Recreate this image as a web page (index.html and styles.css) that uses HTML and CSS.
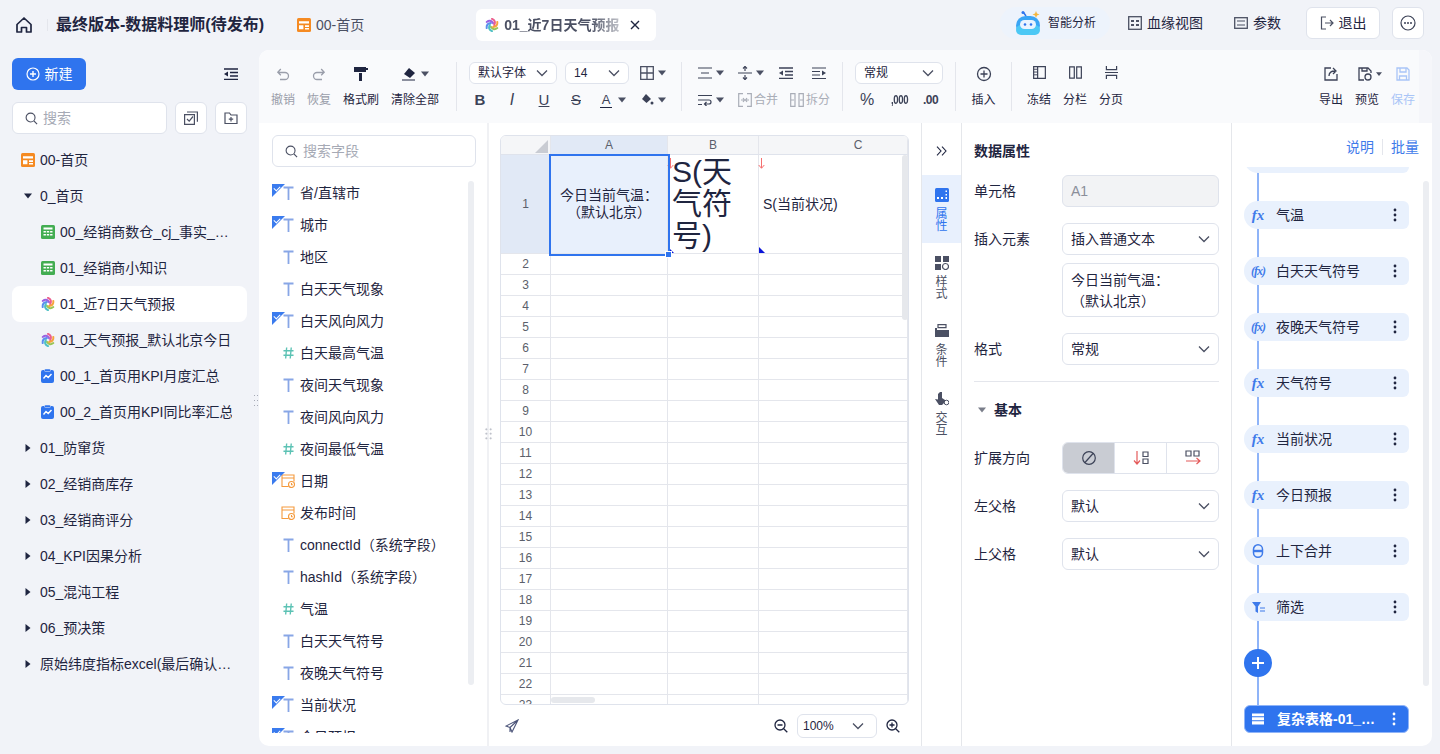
FILE: index.html
```html
<!DOCTYPE html>
<html lang="zh-CN">
<head>
<meta charset="utf-8">
<title>最终版本-数据料理师(待发布)</title>
<link rel="stylesheet" href="styles.css">
</head>
<body>
<svg class="sprite" aria-hidden="true">
  <symbol id="i-dash" viewBox="0 0 14 14"><rect width="14" height="14" rx="1.5" fill="#f58a22"/><path d="M2 3.2h10v2.3H2zM2 7.3h4.4v4H2zM8 7.300h4v1.600H8zM8 10h4v1.400H8z" fill="#fff"/></symbol>
  <symbol id="i-sheet" viewBox="0 0 14 14"><rect width="14" height="14" rx="1.5" fill="#43ad52"/><path d="M2.5 2.5h9v2h-9zM2.5 6h2.400v1.600H2.500zM5.800 6h2.400v1.600H5.800zM9.100 6h2.400v1.600H9.100zM2.500 8.900h2.400v1.600H2.500zM5.800 8.900h2.400v1.600H5.800zM9.100 8.900h2.400v1.600H9.100z" fill="#fff"/></symbol>
  <symbol id="i-kpi" viewBox="0 0 14 14"><rect y="1" width="13" height="13" rx="2" fill="#2f74ee"/><rect x="3.500" width="6" height="2.500" rx="1" fill="#2f74ee" stroke="#f1f3f8" stroke-width=".5"/><path d="M2.500 9.500 5 6.500l2.200 2L10.500 5" fill="none" stroke="#fff" stroke-width="1.400"/></symbol>
  <symbol id="i-wheel" viewBox="0 0 16 16" fill="none" stroke-width="2.300" stroke-linecap="round"><path d="M14.060 11.500Q9.810 14.760 6.750 10.170" stroke="#9ac556"/><path d="M8 15Q3.050 12.950 5.500 8" stroke="#4fc0c4"/><path d="M1.940 11.500Q1.240 6.190 6.750 5.830" stroke="#5a8fee"/><path d="M1.940 4.500Q6.190 1.240 9.250 5.830" stroke="#9a62e0"/><path d="M8 1Q12.950 3.050 10.500 8" stroke="#ec5f8d"/><path d="M14.060 4.500Q14.760 9.810 9.250 10.170" stroke="#f5a43c"/></symbol>
  <symbol id="i-caret" viewBox="0 0 8 8"><path d="M0 1.500h8L4 6.500z" fill="currentColor"/></symbol>
  <symbol id="i-chev" viewBox="0 0 12 8"><path d="M1 1.500 6 6.500l5-5" fill="none" stroke="currentColor" stroke-width="1.300"/></symbol>
  <symbol id="i-search" viewBox="0 0 14 14"><circle cx="6" cy="6" r="4.800" fill="none" stroke="currentColor" stroke-width="1.200"/><path d="m9.600 9.600 3.400 3.400" stroke="currentColor" stroke-width="1.300"/></symbol>
  <symbol id="i-t" viewBox="0 0 11 14"><path d="M.5 1.500h10M5.500 1.500V14" fill="none" stroke="#88a6e6" stroke-width="1.800"/></symbol>
  <symbol id="i-num" viewBox="0 0 12 14"><path d="M4 1 2.900 13M9 1 7.900 13M.5 4.500h11M.5 9.500h11" fill="none" stroke="#5cc2b4" stroke-width="1.500"/></symbol>
  <symbol id="i-date" viewBox="0 0 14 14" fill="none" stroke="#f59a3c" stroke-width="1.100"><path d="M7.500 12.500H1V1h12v6.500M1 4h12"/><circle cx="10.500" cy="10.500" r="3"/><path d="M10.500 9v1.700h1.300"/></symbol>
  <symbol id="i-dots" viewBox="0 0 4 14"><circle cx="2" cy="2" r="1.400" fill="currentColor"/><circle cx="2" cy="7" r="1.400" fill="currentColor"/><circle cx="2" cy="12" r="1.400" fill="currentColor"/></symbol>
  <symbol id="i-align" viewBox="0 0 14 12"><path d="M0 1h14M3 6h8M0 11h14" stroke="currentColor" stroke-width="1.200"/></symbol>
  <symbol id="i-indent" viewBox="0 0 14 12"><path d="M0 1h14M6 4.500h8M6 8h8M0 11.500h14" stroke="currentColor" stroke-width="1.300"/><path d="M4 3.500v5L0 6z" fill="currentColor"/></symbol>
  <symbol id="i-outdent" viewBox="0 0 14 12"><path d="M0 1h14M0 4.500h8M0 8h8M0 11.500h14" stroke="currentColor" stroke-width="1.200"/><path d="M10 3.500v5L14 6z" fill="currentColor"/></symbol>
  <symbol id="i-flag" viewBox="0 0 7 11"><path d="M3.500 0v10M.7 7l2.800 3.300L6.300 7" fill="none" stroke="#f57070"/></symbol>
</svg>
<div class="app">
  <header class="top">
    <div class="top-left">
      <svg class="home" viewBox="0 0 18 18" width="18" height="18"><path d="M2 8.500 9 2l7 6.500V16h-4.500v-4.500h-5V16H2z" fill="none" stroke="#1f2540" stroke-width="1.700" stroke-linejoin="round"/></svg>
      <span class="vline"></span>
      <h1 class="title">最终版本-数据料理师(待发布)</h1>
      <a class="tab"><svg class="ic14"><use href="#i-dash"/></svg>00-首页</a>
      <a class="tab tab-on"><svg class="ic14"><use href="#i-wheel"/></svg><span class="tab-text">01_近7日天气预报</span><svg class="tab-x" viewBox="0 0 10 10" width="10" height="10"><path d="m1 1 8 8M9 1 1 9" stroke="#1f2540" stroke-width="1.400"/></svg></a>
    </div>
    <div class="top-right">
      <a class="ai">
        <svg viewBox="0 0 28 26" width="28" height="26"><path d="M11 6 8.500 2.500" stroke="#2f74ee" stroke-width="1.500"/><circle cx="8" cy="2.500" r="1.500" fill="#2f74ee"/><path d="m21 1 1 2.500 2.500 1-2.500 1-1 2.500-1-2.500-2.500-1 2.500-1z" fill="#f5b63c"/><rect x="1" y="6" width="24" height="19" rx="9.500" fill="#3aa5f5"/><rect x="1" y="15" width="24" height="10" rx="5" fill="#4cc8f5"/><rect x="5" y="10" width="16" height="9" rx="4.500" fill="#eaf4ff"/><circle cx="10" cy="14.500" r="1.300" fill="#2f74ee"/><circle cx="16" cy="14.500" r="1.300" fill="#2f74ee"/></svg>
        智能分析
      </a>
      <a class="link link-a"><svg viewBox="0 0 14 14" width="14" height="14"><rect x=".7" y=".7" width="12.600" height="12.600" fill="none" stroke="#4b5063" stroke-width="1.300"/><path d="M3 4h3v2H3zM3 8h3v2H3zM8 4h3v2H8zM8 8h3v2H8z" fill="#4b5063"/></svg>血缘视图</a>
      <a class="link link-b"><svg viewBox="0 0 14 14" width="14" height="14"><rect x=".7" y="1.700" width="12.600" height="10.600" fill="none" stroke="#4b5063" stroke-width="1.300"/><path d="M3 5h8M3 9h8" stroke="#4b5063" stroke-width="1.200"/></svg>参数</a>
      <a class="btn-out"><svg viewBox="0 0 14 14" width="14" height="14" fill="none" stroke="#4b5063" stroke-width="1.200"><path d="M6 1H1.500v12H6M5 7h8M10 4l3 3-3 3"/></svg>退出</a>
      <a class="btn-more"><svg viewBox="0 0 16 16" width="16" height="16"><circle cx="8" cy="8" r="7" fill="none" stroke="#3c4257" stroke-width="1.200"/><circle cx="5" cy="8" r="1" fill="#3c4257"/><circle cx="8" cy="8" r="1" fill="#3c4257"/><circle cx="11" cy="8" r="1" fill="#3c4257"/></svg></a>
    </div>
  </header>

  <main class="main">
    <aside class="side">
      <div class="side-head">
        <a class="btn-new"><svg viewBox="0 0 14 14" width="14" height="14"><circle cx="7" cy="7" r="6" fill="none" stroke="#fff" stroke-width="1.200"/><path d="M7 4v6M4 7h6" stroke="#fff" stroke-width="1.400"/></svg>新建</a>
        <svg class="collapse" viewBox="0 0 14 12" width="14" height="12"><use href="#i-indent"/></svg>
      </div>
      <div class="side-tools">
        <label class="search search-side"><svg class="ic-s"><use href="#i-search"/></svg>搜索</label>
        <a class="sq"><svg viewBox="0 0 14 14" width="14" height="14" fill="none" stroke="#4b5063" stroke-width="1.200"><path d="M.6 3.600h9.800v9.800H.6zM3 1h10.400v9.800"/><path d="m3 8 2.200 2.200L9 5.500"/></svg></a>
        <a class="sq"><svg viewBox="0 0 14 14" width="14" height="14" fill="none" stroke="#4b5063" stroke-width="1.200"><path d="M1 2h4.500L7 4h6v8.500H1zM7 6v4.500M4.800 8.200h4.400"/></svg></a>
      </div>
      <nav class="tree">
        <a class="node"><svg class="ic14"><use href="#i-dash"/></svg><span>00-首页</span></a>
        <a class="node"><svg class="arrow"><use href="#i-caret"/></svg><span>0_首页</span></a>
        <a class="node sub"><svg class="ic14"><use href="#i-sheet"/></svg><span>00_经销商数仓_cj_事实_…</span></a>
        <a class="node sub"><svg class="ic14"><use href="#i-sheet"/></svg><span>01_经销商小知识</span></a>
        <a class="node sub node-on"><svg class="ic14"><use href="#i-wheel"/></svg><span>01_近7日天气预报</span></a>
        <a class="node sub"><svg class="ic14"><use href="#i-wheel"/></svg><span>01_天气预报_默认北京今日</span></a>
        <a class="node sub"><svg class="ic14"><use href="#i-kpi"/></svg><span>00_1_首页用KPI月度汇总</span></a>
        <a class="node sub"><svg class="ic14"><use href="#i-kpi"/></svg><span>00_2_首页用KPI同比率汇总</span></a>
        <a class="node"><svg class="arrow closed"><use href="#i-caret"/></svg><span>01_防窜货</span></a>
        <a class="node"><svg class="arrow closed"><use href="#i-caret"/></svg><span>02_经销商库存</span></a>
        <a class="node"><svg class="arrow closed"><use href="#i-caret"/></svg><span>03_经销商评分</span></a>
        <a class="node"><svg class="arrow closed"><use href="#i-caret"/></svg><span>04_KPI因果分析</span></a>
        <a class="node"><svg class="arrow closed"><use href="#i-caret"/></svg><span>05_混沌工程</span></a>
        <a class="node"><svg class="arrow closed"><use href="#i-caret"/></svg><span>06_预决策</span></a>
        <a class="node"><svg class="arrow closed"><use href="#i-caret"/></svg><span>原始纬度指标excel(最后确认…</span></a>
      </nav>
      <span class="grip grip-side"></span>
    </aside>

    <section class="work">
      <div class="toolbar">
        <div class="tg tg-file">
          <a class="tool off w36"><svg viewBox="0 0 16 16" width="16" height="16" fill="none" stroke="#9a9eaa" stroke-width="1.300"><path d="M3 6.500h7a3.500 3.500 0 0 1 0 7H5M5.800 3 2.800 6.300l3 3"/></svg>撤销</a>
          <a class="tool off w36"><svg viewBox="0 0 16 16" width="16" height="16" fill="none" stroke="#9a9eaa" stroke-width="1.300"><path d="M13 6.500H6a3.500 3.500 0 0 0 0 7h5M10.200 3l3 3.300-3 3"/></svg>恢复</a>
          <a class="tool w48"><svg viewBox="0 0 16 16" width="16" height="16"><path d="M1 1h12v5H1z" fill="#1f2540"/><path d="M13 2h2v2h-2z" fill="#1f2540"/><path d="M6 7h3v8H6z" fill="#1f2540"/></svg>格式刷</a>
          <a class="tool w60"><span class="tool-ic"><svg viewBox="0 0 16 14" width="16" height="14"><path d="m8 1 6 5-5 5-6-4z" fill="#1f2540"/><path d="M1 13h13" stroke="#1f2540"/></svg><svg class="caret8"><use href="#i-caret"/></svg></span>清除全部</a>
        </div>
        <i class="sep"></i>
        <div class="tg tg-font">
          <div class="tr">
            <div class="sel sel-font">默认字体<svg class="chev"><use href="#i-chev"/></svg></div>
            <div class="sel sel-size">14<svg class="chev"><use href="#i-chev"/></svg></div>
            <span class="ti ti-border"><svg viewBox="0 0 14 14" width="14" height="14" fill="none" stroke="#4b5063" stroke-width="1.300"><path d="M.7.700h12.600v12.600H.7zM7 .7v12.600M.7 7h12.600"/></svg><svg class="caret8"><use href="#i-caret"/></svg></span>
          </div>
          <div class="tr tr-fmt">
            <span class="ti fmt-b">B</span>
            <span class="ti fmt-i">I</span>
            <span class="ti fmt-u">U</span>
            <span class="ti fmt-s">S</span>
            <span class="ti fmt-a"><span class="fmt-a-l">A</span><svg class="caret8"><use href="#i-caret"/></svg></span>
            <span class="ti fmt-f"><svg viewBox="0 0 14 14" width="14" height="14"><path d="m6 1 5 5-4.500 4L2 6z" fill="#3c4257"/><circle cx="12" cy="10" r="1.500" fill="#3c4257"/></svg><svg class="caret8"><use href="#i-caret"/></svg></span>
          </div>
        </div>
        <i class="sep"></i>
        <div class="tg tg-align">
          <div class="tr">
            <span class="ti al1"><svg viewBox="0 0 14 12" width="14" height="12"><use href="#i-align"/></svg><svg class="caret8"><use href="#i-caret"/></svg></span>
            <span class="ti al2"><svg viewBox="0 0 14 14" width="14" height="14" fill="none" stroke="#3c4257" stroke-width="1.200"><path d="M0 7h14M7 .5V5M7 9v4.500"/><path d="M5 2.500 7 .5l2 2M5 11.500l2 2 2-2" /></svg><svg class="caret8"><use href="#i-caret"/></svg></span>
            <span class="ti al3"><svg viewBox="0 0 14 12" width="14" height="12"><use href="#i-indent"/></svg></span>
            <span class="ti al4"><svg viewBox="0 0 14 12" width="14" height="12"><use href="#i-outdent"/></svg></span>
          </div>
          <div class="tr">
            <span class="ti al1"><svg viewBox="0 0 14 12" width="14" height="12" fill="none" stroke="#3c4257" stroke-width="1.200"><path d="M0 1.500h14M0 6h11a2 2 0 0 1 0 4H7M0 10.500h4M8.500 8l-2 2 2 2"/></svg><svg class="caret8"><use href="#i-caret"/></svg></span>
            <span class="ti dim merge"><svg viewBox="0 0 14 14" width="14" height="14" fill="none" stroke="#a9adb7" stroke-width="1.200"><path d="M5 .7H.7v12.600H5M9 .7h4.300v12.600H9M3 7h3M11 7H8M5 5l1.500 2L5 9M9 5 7.500 7 9 9"/></svg>合并</span>
            <span class="ti dim split"><svg viewBox="0 0 14 14" width="14" height="14" fill="none" stroke="#a9adb7" stroke-width="1.200"><path d="M5 .7H.7v12.600H5V.7zM9 .7h4.300v12.600H9zM1 7h3M10 7h3"/></svg>拆分</span>
          </div>
        </div>
        <i class="sep"></i>
        <div class="tg tg-num">
          <div class="tr"><div class="sel sel-fmt">常规<svg class="chev"><use href="#i-chev"/></svg></div></div>
          <div class="tr tr-num"><span class="n n1">%</span><span class="n n2">,000</span><span class="n n3">.00</span></div>
        </div>
        <i class="sep"></i>
        <a class="tool w57"><svg viewBox="0 0 16 16" width="16" height="16"><circle cx="8" cy="8" r="6.500" fill="none" stroke="#3c4257" stroke-width="1.300"/><path d="M8 4.500v7M4.500 8h7" stroke="#3c4257" stroke-width="1.300"/></svg>插入</a>
        <i class="sep"></i>
        <div class="tg tg-view">
          <a class="tool w36"><svg viewBox="0 0 14 14" width="14" height="14" fill="none" stroke="#3c4257" stroke-width="1.300"><path d="M.7.700h12.600v12.600H.7zM5 .7v12.600"/><path d="M1 3.500h4M1 6.500h4M1 9.500h4" stroke-width="1"/></svg>冻结</a>
          <a class="tool w36"><svg viewBox="0 0 14 14" width="14" height="14" fill="none" stroke="#3c4257" stroke-width="1.300"><path d="M.7 1h5v12h-5zM8.300 1h5v12h-5z"/></svg>分栏</a>
          <a class="tool w36"><svg viewBox="0 0 14 14" width="14" height="14" fill="none" stroke="#3c4257" stroke-width="1.300"><path d="M1.500 0v4h11V0M1.500 14v-4h11v4M0 7h14"/></svg>分页</a>
        </div>
        <div class="tg tg-save">
          <a class="tool w36"><svg viewBox="0 0 14 14" width="14" height="14" fill="none" stroke="#3c4257" stroke-width="1.300"><path d="M7 1H1v12h12V7M5 9c0-3 2-5 6-5M9 1l3 3-3 3"/></svg>导出</a>
          <a class="tool w36 tool-pre"><span class="tool-ic"><svg viewBox="0 0 14 14" width="14" height="14" fill="none" stroke="#3c4257" stroke-width="1.300"><path d="M6 13H1V1h9l3 3v2"/><path d="M4 1v3h5V1"/><circle cx="10" cy="10" r="3"/></svg><svg class="caret6"><use href="#i-caret"/></svg></span>预览</a>
          <a class="tool w36 tool-save"><svg viewBox="0 0 14 14" width="14" height="14" fill="none" stroke="#a9c5f7" stroke-width="1.300"><path d="M1 1h10l2 2v10H1zM4 1v4h6V1M3.500 13V9h7v4"/></svg>保存</a>
        </div>
      </div>

      <div class="body">
        <div class="fields">
          <label class="search search-field"><svg class="ic-s"><use href="#i-search"/></svg>搜索字段</label>
          <ul class="field-list">
            <li class="field used"><svg class="fi"><use href="#i-t"/></svg>省/直辖市</li>
            <li class="field used"><svg class="fi"><use href="#i-t"/></svg>城市</li>
            <li class="field"><svg class="fi"><use href="#i-t"/></svg>地区</li>
            <li class="field"><svg class="fi"><use href="#i-t"/></svg>白天天气现象</li>
            <li class="field used"><svg class="fi"><use href="#i-t"/></svg>白天风向风力</li>
            <li class="field"><svg class="fi"><use href="#i-num"/></svg>白天最高气温</li>
            <li class="field"><svg class="fi"><use href="#i-t"/></svg>夜间天气现象</li>
            <li class="field"><svg class="fi"><use href="#i-t"/></svg>夜间风向风力</li>
            <li class="field"><svg class="fi"><use href="#i-num"/></svg>夜间最低气温</li>
            <li class="field used"><svg class="fi fi-d"><use href="#i-date"/></svg>日期</li>
            <li class="field"><svg class="fi fi-d"><use href="#i-date"/></svg>发布时间</li>
            <li class="field"><svg class="fi"><use href="#i-t"/></svg>connectId（系统字段）</li>
            <li class="field"><svg class="fi"><use href="#i-t"/></svg>hashId（系统字段）</li>
            <li class="field"><svg class="fi"><use href="#i-num"/></svg>气温</li>
            <li class="field"><svg class="fi"><use href="#i-t"/></svg>白天天气符号</li>
            <li class="field"><svg class="fi"><use href="#i-t"/></svg>夜晚天气符号</li>
            <li class="field used"><svg class="fi"><use href="#i-t"/></svg>当前状况</li>
            <li class="field used"><svg class="fi"><use href="#i-t"/></svg>今日预报</li>
          </ul>
          <span class="sb sb-fields"></span>
          <span class="grip grip-fields"></span>
        </div>

        <div class="canvas">
          <div class="sheet">
            <table class="grid">
              <colgroup><col class="c0"><col class="c1"><col class="c2"><col></colgroup>
              <thead><tr><th class="corner"><span class="tri"></span></th><th class="hl">A</th><th>B</th><th class="col-c">C</th></tr></thead>
              <tbody>
                <tr class="r1"><th class="hl">1</th>
                  <td class="a1">今日当前气温：<br>（默认北京）</td>
                  <td class="b1"><svg class="flag"><use href="#i-flag"/></svg><span class="mark"></span>S(天气符号)</td>
                  <td class="c1c"><svg class="flag"><use href="#i-flag"/></svg><span class="mark"></span>S(当前状况)</td></tr>
                <tr><th>2</th><td></td><td></td><td></td></tr>
                <tr><th>3</th><td></td><td></td><td></td></tr>
                <tr><th>4</th><td></td><td></td><td></td></tr>
                <tr><th>5</th><td></td><td></td><td></td></tr>
                <tr><th>6</th><td></td><td></td><td></td></tr>
                <tr><th>7</th><td></td><td></td><td></td></tr>
                <tr><th>8</th><td></td><td></td><td></td></tr>
                <tr><th>9</th><td></td><td></td><td></td></tr>
                <tr><th>10</th><td></td><td></td><td></td></tr>
                <tr><th>11</th><td></td><td></td><td></td></tr>
                <tr><th>12</th><td></td><td></td><td></td></tr>
                <tr><th>13</th><td></td><td></td><td></td></tr>
                <tr><th>14</th><td></td><td></td><td></td></tr>
                <tr><th>15</th><td></td><td></td><td></td></tr>
                <tr><th>16</th><td></td><td></td><td></td></tr>
                <tr><th>17</th><td></td><td></td><td></td></tr>
                <tr><th>18</th><td></td><td></td><td></td></tr>
                <tr><th>19</th><td></td><td></td><td></td></tr>
                <tr><th>20</th><td></td><td></td><td></td></tr>
                <tr><th>21</th><td></td><td></td><td></td></tr>
                <tr><th>22</th><td></td><td></td><td></td></tr>
                <tr><th>23</th><td></td><td></td><td></td></tr>
              </tbody>
            </table>
            <span class="selbox"></span>
            <span class="sb sb-v"></span>
            <span class="sb sb-h"></span>
          </div>
          <div class="canvas-foot">
            <svg viewBox="0 0 14 14" width="14" height="14" fill="none" stroke="#4a5378" stroke-width="1.100"><path d="M13 1 1 7l4 1.500L7 13zM13 1 5 8.500v4.500"/></svg>
            <div class="zoom">
              <svg viewBox="0 0 14 14" width="14" height="14" fill="none" stroke="#1f2540" stroke-width="1.300"><circle cx="6" cy="6" r="5"/><path d="m9.700 9.700 3.600 3.600M3.500 6h5"/></svg>
              <div class="sel sel-zoom">100%<svg class="chev"><use href="#i-chev"/></svg></div>
              <svg viewBox="0 0 14 14" width="14" height="14" fill="none" stroke="#1f2540" stroke-width="1.300"><circle cx="6" cy="6" r="5"/><path d="m9.700 9.700 3.600 3.600M3.500 6h5M6 3.500v5"/></svg>
            </div>
          </div>
        </div>

        <nav class="vtabs">
          <a class="vexpand"><svg viewBox="0 0 12 10" width="12" height="10" fill="none" stroke="#1f2540" stroke-width="1.100"><path d="m1 .7 4 4.300-4 4.300M6 .7l4 4.300-4 4.300"/></svg></a>
          <a class="vtab vtab-on"><svg viewBox="0 0 14 14" width="14" height="14"><rect width="14" height="14" rx="1.500" fill="#2f74ee"/><path d="M2 9h2v2H2zM6 9h2v2H6zM10.500 2.500H12v1.500h-1.500zM10.500 6H12v1.500h-1.500zM10.500 9H12v2h-1.500z" fill="#fff"/></svg><span>属<br>性</span></a>
          <a class="vtab"><svg viewBox="0 0 14 14" width="14" height="14"><path d="M0 0h6v6H0zM8 0h6v6H8zM0 8h6v6H0z" fill="#4b5063"/><circle cx="10.500" cy="10.500" r="3" fill="none" stroke="#4b5063" stroke-width="1.200"/></svg><span>样<br>式</span></a>
          <a class="vtab"><svg viewBox="0 0 14 14" width="14" height="14"><path d="M3 .7h8v3H3z" fill="none" stroke="#4b5063" stroke-width="1.200"/><path d="M0 6h14v7H0z" fill="#4b5063"/><path d="M0 4h2v2H0z" fill="#4b5063"/></svg><span>条<br>件</span></a>
          <a class="vtab"><svg viewBox="0 0 14 14" width="14" height="14"><path d="M5 0h2v6l3 2v2L7 13H4L0 7l3 .5V2z" fill="#4b5063"/><circle cx="11.500" cy="10.500" r="2.300" fill="none" stroke="#4b5063"/></svg><span>交<br>互</span></a>
        </nav>

        <div class="props">
          <h2 class="props-title">数据属性</h2>
          <div class="row"><label>单元格</label><div class="sel sel-ro">A1</div></div>
          <div class="row"><label>插入元素</label><div class="sel">插入普通文本<svg class="chev"><use href="#i-chev"/></svg></div></div>
          <div class="row row-ta"><div class="ta">今日当前气温：<br>（默认北京）</div></div>
          <div class="row"><label>格式</label><div class="sel">常规<svg class="chev"><use href="#i-chev"/></svg></div></div>
          <hr class="rule">
          <div class="sec"><svg class="caret8"><use href="#i-caret"/></svg>基本</div>
          <div class="row row-exp"><label>扩展方向</label>
            <div class="seg">
              <span class="seg-on"><svg viewBox="0 0 14 14" width="14" height="14" fill="none" stroke="#3c4257" stroke-width="1.200"><circle cx="7" cy="7" r="6.300"/><path d="M11 2.500 3 11.500"/></svg></span>
              <span><svg viewBox="0 0 16 16" width="16" height="16" fill="none"><path d="M4 1v13M1 10.500 4 14l3-3.500" stroke="#e45b5b" stroke-width="1.200"/><path d="M10 2h5v4.500h-5zM10 9h5v4.500h-5z" stroke="#4b5063" stroke-width="1.200"/></svg></span>
              <span><svg viewBox="0 0 16 16" width="16" height="16" fill="none"><path d="M1 1h5v5H1zM9 1h5v5H9z" stroke="#4b5063" stroke-width="1.200"/><path d="M1 11h14M11.500 8l3.500 3-3.500 3" stroke="#e45b5b" stroke-width="1.200"/></svg></span>
            </div>
          </div>
          <div class="row"><label>左父格</label><div class="sel">默认<svg class="chev"><use href="#i-chev"/></svg></div></div>
          <div class="row"><label>上父格</label><div class="sel">默认<svg class="chev"><use href="#i-chev"/></svg></div></div>
        </div>

        <div class="flowpane">
          <div class="flow-head"><a>说明</a><i></i><a>批量</a></div>
          <div class="flow">
            <span class="flow-line"></span>
            <div class="step"></div>
            <div class="step"><em class="fx">fx</em><span>气温</span><svg class="dots"><use href="#i-dots"/></svg></div>
            <div class="step"><em class="fx fx-p">(fx)</em><span>白天天气符号</span><svg class="dots"><use href="#i-dots"/></svg></div>
            <div class="step"><em class="fx fx-p">(fx)</em><span>夜晚天气符号</span><svg class="dots"><use href="#i-dots"/></svg></div>
            <div class="step"><em class="fx">fx</em><span>天气符号</span><svg class="dots"><use href="#i-dots"/></svg></div>
            <div class="step"><em class="fx">fx</em><span>当前状况</span><svg class="dots"><use href="#i-dots"/></svg></div>
            <div class="step"><em class="fx">fx</em><span>今日预报</span><svg class="dots"><use href="#i-dots"/></svg></div>
            <div class="step"><svg class="sti" viewBox="0 0 14 14"><rect x="2.500" y=".8" width="9" height="12.400" rx="4.500" fill="none" stroke="#3f7bea" stroke-width="1.500"/><path d="M2.500 5.800h9v2.400h-9z" fill="#3f7bea"/></svg><span>上下合并</span><svg class="dots"><use href="#i-dots"/></svg></div>
            <div class="step"><svg class="sti" viewBox="0 0 14 14"><path d="M1 2h9L7 6.500V13L4.500 11.500V6.500z" fill="#3f7bea"/><path d="M9 8h5M9 11h5" stroke="#3f7bea" stroke-width="1.200"/></svg><span>筛选</span><svg class="dots"><use href="#i-dots"/></svg></div>
            <a class="add"><svg viewBox="0 0 12 12" width="12" height="12"><path d="M6 0v12M0 6h12" stroke="#fff" stroke-width="2"/></svg></a>
            <div class="step step-main"><svg class="sti" viewBox="0 0 14 14"><path d="M1 1.500h12v2.700H1zM1 5.200h12v3H1zM1 9.200h12v3.300H1z" fill="#fff"/></svg><span>复杂表格-01_…</span><svg class="dots"><use href="#i-dots"/></svg></div>
          </div>
          <span class="sb sb-flow"></span>
        </div>
      </div>
    </section>
  </main>
</div>
</body>
</html>
```

FILE: styles.css
```css
* { box-sizing: border-box; }
html, body { margin: 0; height: 100%; }
body {
  background: #f1f3f8;
  color: #1f2540;
  font: 14px/20px "Liberation Sans", "Noto Sans CJK SC", sans-serif;
  overflow: hidden;
}
a { color: inherit; text-decoration: none; }
i, em { font-style: normal; }
.sprite { display: none; }
.ic14 { width: 14px; height: 14px; flex: none; }
.ic-s { width: 13px; height: 13px; flex: none; }

.app { height: 754px; display: flex; flex-direction: column; }

/* Top bar */
.top { height: 50px; display: flex; justify-content: space-between; align-items: center; padding: 0 16px 0 15px; flex: none; }
.top-left, .top-right { display: flex; align-items: center; }
.top-right { margin-top: -4px; }
.vline { width: 1px; height: 12px; background: #e4e6ec; margin: 0 8px 0 14px; }
.title { margin: 0; font-size: 16px; line-height: 22px; font-weight: 700; width: 241px; white-space: nowrap; }
.tab { display: flex; align-items: center; gap: 5px; color: #4b5063; height: 32px; }
.tab-on { width: 180px; margin-left: 112px; padding: 0 16px 0 9px; background: #fff; border-radius: 6px; font-weight: 700; }
.tab-text { width: 115px; white-space: nowrap; overflow: hidden; -webkit-mask-image: linear-gradient(90deg, #000 75%, rgba(0,0,0,.35)); mask-image: linear-gradient(90deg, #000 75%, rgba(0,0,0,.35)); }
.tab-x { margin-left: auto; flex: none; }
.ai { display: flex; align-items: center; gap: 5px; width: 110px; height: 32px; padding-left: 15px; border-radius: 16px; background: #edf3fc; font-size: 12px; }
.link { display: flex; align-items: center; gap: 5px; }
.link-a { margin-left: 18px; }
.link-b { margin-left: 31px; }
.btn-out { display: flex; align-items: center; justify-content: center; gap: 5px; width: 74px; height: 32px; margin-left: 25px; background: #fff; border: 1px solid #dfe3ec; border-radius: 6px; }
.btn-more { display: flex; align-items: center; justify-content: center; width: 32px; height: 32px; margin-left: 12px; background: #fff; border: 1px solid #dfe3ec; border-radius: 6px; }

/* Main */
.main { flex: 1; display: flex; min-height: 0; padding-bottom: 8px; }

/* Sidebar */
.side { width: 259px; flex: none; padding: 8px 12px 0; position: relative; }
.side-head { display: flex; justify-content: space-between; align-items: center; height: 32px; padding-right: 9px; }
.btn-new { display: flex; align-items: center; justify-content: center; gap: 5px; width: 74px; height: 32px; background: #2f74ee; color: #fff; border-radius: 6px; }
.collapse { color: #1f2540; }
.side-tools { display: flex; gap: 8px; margin-top: 12px; }
.search { display: flex; align-items: center; gap: 5px; height: 32px; padding-left: 12px; background: #fff; border: 1px solid #dfe3ec; border-radius: 6px; color: #a6aab5; }
.search svg { color: #4b5063; }
.search-side { width: 155px; }
.sq { display: flex; align-items: center; justify-content: center; width: 32px; height: 32px; background: #fff; border: 1px solid #dfe3ec; border-radius: 6px; }
.tree { margin-top: 8px; }
.node { display: flex; align-items: center; gap: 5px; height: 36px; padding: 0 15px 0 9px; border-radius: 8px; white-space: nowrap; }
.node span { overflow: hidden; }
.sub { padding-left: 29px; }
.node-on { background: #fff; }
.arrow { width: 8px; height: 8px; margin: 0 3px; color: #1f2540; flex: none; }
.arrow.closed { transform: rotate(-90deg); }
.grip { position: absolute; width: 6px; height: 14px; background-image: radial-gradient(circle, #a6aab5 0.8px, transparent 1px); background-size: 3px 5px; }
.grip-side { left: 253px; top: 343px; }

/* Workspace */
.work { width: 1173px; flex: none; background: #fff; border-radius: 10px; overflow: hidden; display: flex; flex-direction: column; }

/* Toolbar */
.toolbar { height: 73px; flex: none; background: #f9fafc; display: flex; align-items: stretch; padding: 12px 0 12px; border-right: 13px solid #f5f6fa; font-size: 12px; }
.sep { width: 1px; background: #e4e6ec; flex: none; }
.tg { display: flex; }
.tg-file { padding-left: 6px; width: 197px; }
.tool { display: flex; flex-direction: column; align-items: center; justify-content: space-between; height: 46px; white-space: nowrap; line-height: 16px; }
.tool > svg, .tool-ic { margin-top: 4px; height: 16px; display: flex; align-items: center; gap: 4px; }
.tool.off { color: #9a9eaa; }
.w36 { width: 36px; }
.w48 { width: 48px; }
.w60 { width: 60px; margin-left: 0; }
.w57 { width: 55px; }
.caret8 { width: 8px; height: 8px; color: #4b5063; flex: none; }
.caret6 { width: 6px; height: 6px; color: #4b5063; flex: none; }
.tg-font, .tg-align, .tg-num { flex-direction: column; justify-content: space-between; }
.tg-font { width: 224px; padding-left: 12px; }
.tr { display: flex; align-items: center; height: 22px; }
.tr-fmt { position: relative; }
.sel { display: flex; align-items: center; justify-content: space-between; background: #fff; border: 1px solid #dfe3ec; border-radius: 6px; padding: 0 8px; white-space: nowrap; }
.chev { width: 12px; height: 8px; color: #4b5063; flex: none; }
.sel-font { width: 88px; height: 22px; }
.sel-size { width: 64px; height: 22px; margin-left: 8px; }
.sel-fmt { width: 88px; height: 22px; margin-left: 12px; }
.ti { display: flex; align-items: center; gap: 4px; color: #3c4257; }
.ti-border { margin-left: 11px; }
.fmt-b, .fmt-i, .fmt-u, .fmt-s { width: 32px; justify-content: center; font-size: 15px; }
.fmt-b { font-weight: 700; margin-left: -5px; }
.fmt-i { font-style: italic; font-size: 16px; }
.fmt-u { text-decoration: underline; }
.fmt-s { text-decoration: line-through; }
.fmt-a { margin-left: 8px; gap: 6px; }
.fmt-a-l { width: 12px; text-align: center; font-size: 13px; line-height: 14px; border-bottom: 1.500px solid #1f2540; font-weight: 500; }
.fmt-f { margin-left: 14px; }
.tg-align { width: 160px; padding-left: 16px; }
.al1 { width: 40px; }
.al2 { width: 41px; }
.al3 { width: 33px; }
.dim { color: #a9adb7; gap: 2px; }
.merge { margin-left: 0; width: 52px; }
.tg-num { width: 112px; }
.tr-num { padding-left: 17px; gap: 0; }
.n { font-size: 14px; font-weight: 700; color: #3c4257; white-space: nowrap; }
.n1 { width: 31px; font-size: 16px; font-weight: 400; }
.n2 { width: 32px; font-size: 12px; letter-spacing: -.5px; transform: scaleX(.8); transform-origin: left center; }
.n3 { font-size: 12px; letter-spacing: -.5px; }
.tg-view { padding-left: 9px; width: 123px; }
.tg-view svg { width: 13px; height: 13px; }
.tg-save { margin-left: auto; margin-right: -2px; }
.tool-save { color: #a9c5f7; }
.tool-pre .tool-ic { margin-left: 6px; }

/* Body */
.body { flex: 1; min-height: 0; display: flex; }

/* Fields */
.fields { width: 230px; flex: none; position: relative; border-right: 2px solid #f0f1f4; padding: 12px 0 0 13px; }
.search-field { width: 204px; }
.field-list { list-style: none; margin: 10px 0 0; padding: 0; height: 556px; overflow: hidden; }
.field { display: flex; align-items: center; height: 32px; padding-left: 11px; position: relative; gap: 6px; }
.fi { width: 11px; height: 14px; flex: none; }
.fi-d { width: 14px; margin-left: -2px; margin-right: -1px; }
.used::before { content: ""; position: absolute; left: 0; top: 7px; width: 13px; height: 13px; background: #3a7bee; clip-path: polygon(0 0, 100% 0, 0 100%); }
.used::after { content: ""; position: absolute; left: 2px; top: 9px; width: 5px; height: 3px; border-left: 1px solid #fff; border-bottom: 1px solid #fff; transform: rotate(-45deg); }
.sb { position: absolute; background: #eceef2; border-radius: 3px; }
.sb-fields { left: 209px; top: 58px; width: 6px; height: 504px; }
.grip-fields { left: 225px; top: 304px; width: 9px; height: 14px; background-size: 4.500px 4.500px; }

/* Canvas */
.canvas { width: 433px; flex: none; padding: 12px 12px 0 11px; border-right: 1px solid #e5e7eb; display: flex; flex-direction: column; }
.sheet { height: 570px; position: relative; border: 1px solid #dfe3ec; border-radius: 6px; overflow: hidden; flex: none; }
.grid { width: 100%; table-layout: fixed; border-collapse: separate; border-spacing: 0; font-size: 12px; }
.c0 { width: 50px; }
.c1 { width: 117px; }
.c2 { width: 91px; }
.grid th, .grid td { height: 21px; padding: 0; border-right: 1px solid #e4e6ec; border-bottom: 1px solid #e4e6ec; font-weight: 400; }
.grid th { color: #5b5f6b; line-height: 14px; text-align: center; }
.grid thead th { height: 19px; background: #f5f6f8; border-bottom-color: #dfe3ec; }
.grid thead th.hl, .grid th.hl { background: #e1e9f6; }
.grid thead th.col-c { padding-left: 50px; }
.corner { position: relative; }
.tri { position: absolute; right: 2px; bottom: 1px; width: 0; height: 0; border-left: 13px solid transparent; border-bottom: 13px solid #c9ccd3; }
.grid .r1 th, .grid .r1 td { height: 99px; font-size: 14px; line-height: 17px; position: relative; color: #1f2540; }
.grid .r1 th { font-size: 12px; color: #5b5f6b; }
.grid td.a1 { background: #e8f0fc; text-align: center; }
.grid td.b1 { font-size: 30px; line-height: 32px; padding: 0 4px; }
.grid td.c1c { padding: 0 4px; }
.flag { position: absolute; left: -1px; top: 3px; width: 7px; height: 11px; }
.mark { position: absolute; left: 0; bottom: 0; width: 0; height: 0; border-left: 6px solid #0a14d8; border-top: 6px solid transparent; }
.selbox { position: absolute; left: 48px; top: 18px; width: 121px; height: 102px; border: 2px solid #2f74ee; }
.selbox::after { content: ""; position: absolute; right: -4px; bottom: -4px; width: 5px; height: 5px; background: #2f74ee; border: 1px solid #fff; }
.sb-v { left: 401px; top: 19px; width: 6px; height: 165px; background: #e6e8ec; }
.sb-h { left: 50px; top: 561px; width: 44px; height: 6px; background: #e6e8ec; }
.canvas-foot { flex: 1; display: flex; align-items: center; justify-content: space-between; padding: 0 9px 0 5px; }
.zoom { display: flex; align-items: center; gap: 9px; }
.sel-zoom { width: 80px; height: 24px; font-size: 12px; padding: 0 12px 0 5px; }

/* Vertical tabs */
.vtabs { width: 40px; flex: none; border-right: 1px solid #e5e7eb; }
.vexpand { display: flex; align-items: center; justify-content: center; height: 52px; padding-top: 4px; }
.vtab { display: flex; flex-direction: column; align-items: center; height: 68px; padding-top: 13px; font-size: 12px; line-height: 12px; color: #4b5063; gap: 6px; }
.vtab-on { background: #e8f0fd; color: #2f74ee; }

/* Props */
.props { width: 270px; flex: none; border-right: 1px solid #e5e7eb; padding: 18px 12px 0; }
.props-title { margin: 0 0 14px; font-size: 14px; line-height: 20px; font-weight: 700; }
.row { display: flex; align-items: center; justify-content: space-between; margin-bottom: 16px; }
.row label { white-space: nowrap; }
.row .sel { width: 157px; height: 32px; padding: 0 8px 0 8px; }
.sel-ro { background: #f2f3f5 !important; color: #8a8e9a; }
.row-ta { justify-content: flex-end; margin-top: -8px; }
.ta { width: 157px; height: 54px; padding: 6px 8px; background: #fff; border: 1px solid #dfe3ec; border-radius: 6px; line-height: 21px; }
.rule { border: 0; border-top: 1px solid #e4e6ec; margin: 0 0 18px; }
.sec { display: flex; align-items: center; gap: 8px; font-weight: 700; padding-left: 4px; margin-bottom: 22px; height: 20px; }
.sec .caret8 { color: #7a7e8a; }
.seg { display: flex; width: 157px; height: 32px; border: 1px solid #dfe3ec; border-radius: 6px; overflow: hidden; background: #fff; }
.seg span { flex: 1; display: flex; align-items: center; justify-content: center; border-left: 1px solid #dfe3ec; }
.seg span:first-child { border-left: 0; }
.seg .seg-on { background: #c9ccd3; }

/* Flow */
.flowpane { flex: 1; position: relative; display: flex; flex-direction: column; min-width: 0; }
.flow-head { height: 44px; flex: none; display: flex; justify-content: flex-end; align-items: center; gap: 8px; padding: 4px 13px 0 0; color: #3f7bea; }
.flow-head i { width: 1px; height: 16px; background: #e4e6ec; }
.flow { flex: 1; position: relative; overflow: hidden; padding: 0 23px 0 12px; display: flex; flex-direction: column; gap: 28px; }
.flow-line { position: absolute; left: 25px; top: 0; width: 2px; height: 538px; background: #8fb4f8; }
.step { position: relative; flex: none; height: 28px; background: #e9f1fd; border-radius: 14px 6px 6px 14px; display: flex; align-items: center; padding: 0 12px 0 7px; }
.step:first-of-type { margin-top: -22px; }
.step span { white-space: nowrap; flex: 1; }
.fx { width: 14px; margin-right: 11px; flex: none; color: #3f7bea; font: italic 700 15px/14px "Liberation Serif", serif; text-align: center; }
.fx-p { font-size: 12px; letter-spacing: -1px; white-space: nowrap; }
.sti { width: 14px; height: 14px; margin-right: 11px; flex: none; }
.dots { width: 4px; height: 14px; flex: none; color: #1f2540; }
.add { position: relative; width: 28px; height: 28px; flex: none; border-radius: 50%; background: #2f74ee; display: flex; align-items: center; justify-content: center; }
.step-main { background: #2f74ee; color: #fff; font-weight: 700; border: 1px solid #8fb4f8; border-radius: 6px; padding-left: 6px; }
.step-main .dots { color: #fff; }
.step-main .sti { margin-right: 12px; }
.sb-flow { left: 191px; top: 58px; width: 6px; height: 505px; }
```
